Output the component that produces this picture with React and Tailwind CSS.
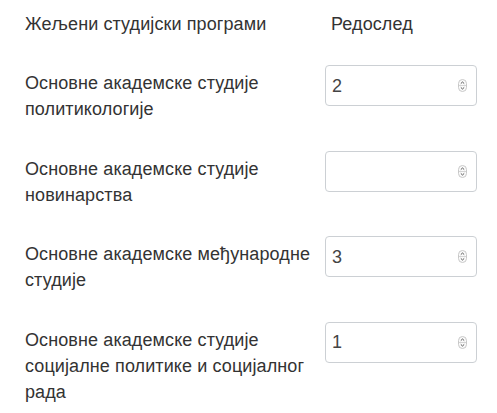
const rows = [
  { label: "Основне академске студије политикологије", value: "2" },
  { label: "Основне академске студије новинарства", value: "" },
  { label: "Основне академске међународне студије", value: "3" },
  { label: "Основне академске студије социјалне политике и социјалног рада", value: "1" },
];

const Spinner = () => (
  <svg width="9" height="13" viewBox="0 0 9 13" className="shrink-0">
    <rect x="0.5" y="0.5" width="8" height="12" rx="4" fill="#fafafa" stroke="#c8c8c8" />
    <line x1="1" y1="6.5" x2="8" y2="6.5" stroke="#d4d4d4" />
    <path d="M2.8 4.6 L4.5 3 L6.2 4.6" fill="none" stroke="#555" strokeWidth="1" />
    <path d="M2.8 8.4 L4.5 10 L6.2 8.4" fill="none" stroke="#555" strokeWidth="1" />
  </svg>
);

const App = () => {
  return (
    <div
      className="bg-white w-[497px] min-h-[413px] pl-[25px] pr-[20px] pt-[11px] text-[18px] leading-[26px] tracking-[0.1px] text-[#333]"
      style={{ fontFamily: '"Liberation Sans", Arial, sans-serif' }}
    >
      {/* Header */}
      <div className="flex">
        <div className="w-[300px] shrink-0">Жељени студијски програми</div>
        <div className="pl-[6px]">Редослед</div>
      </div>

      {/* Rows */}
      <div className="flex flex-col gap-[28.5px] mt-[28px]">
        {rows.map((row, index) => (
          <div key={index} className="flex items-start">
            <div className="w-[292px] shrink-0 pt-[5px]">{row.label}</div>
            <label className="ml-[8px] w-[152px] shrink-0 h-[41px] flex items-center border border-[#ccd0d4] rounded-[4px] pl-[6px] pr-[9px] bg-white">
              <input
                type="text"
                readOnly
                value={row.value}
                className="flex-1 min-w-0 outline-none bg-transparent text-[18px] text-[#444]"
                style={{ fontFamily: '"Liberation Sans", Arial, sans-serif' }}
              />
              <Spinner />
            </label>
          </div>
        ))}
      </div>
    </div>
  );
};

export default App;
